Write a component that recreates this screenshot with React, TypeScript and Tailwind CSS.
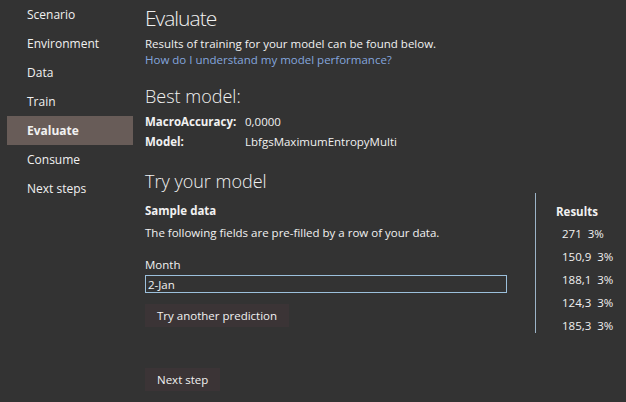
import React, { useState } from 'react';

const navItems = ['Scenario', 'Environment', 'Data', 'Train', 'Evaluate', 'Consume', 'Next steps'];

const results = [
    { value: '271', pct: '3%' },
    { value: '150,9', pct: '3%' },
    { value: '188,1', pct: '3%' },
    { value: '124,3', pct: '3%' },
    { value: '185,3', pct: '3%' },
];

export default function App() {
    const [month, setMonth] = useState('2-Jan');
    const active = 'Evaluate';

    return (
        <div
            className="w-[626px] h-[402px] bg-[#333333] text-[#f1f1f1] flex overflow-hidden text-[11.5px]"
            style={{ fontFamily: '"Segoe UI", "Open Sans", "Noto Sans", sans-serif' }}
        >
            <nav className="w-[145px] shrink-0 pl-[7px] text-[12px]">
                {navItems.map((item) => (
                    <div
                        key={item}
                        className={`w-[126px] h-[29px] flex items-center pl-[20px] ${item === active ? 'bg-[#685c58] font-bold' : ''}`}
                    >
                        {item}
                    </div>
                ))}
            </nav>

            <main className="flex-1 flex flex-col pt-[2px]">
                <h1 className="text-[21px] font-light leading-[32px] tracking-[-1px]">
                    Evaluate
                </h1>
                <p className="mt-[2px] leading-[16px]">Results of training for your model can be found below.</p>
                <a className="leading-[16px] text-[#84a6de] cursor-pointer">How do I understand my model performance?</a>

                <h2 className="mt-[16px] text-[18px] font-light leading-[24px]">Best model:</h2>
                <div className="mt-[6px] grid grid-cols-[100px_1fr] gap-y-[4px] leading-[16px]">
                    <span className="font-bold">MacroAccuracy:</span>
                    <span>0,0000</span>
                    <span className="font-bold">Model:</span>
                    <span>LbfgsMaximumEntropyMulti</span>
                </div>

                <h2 className="mt-[19px] text-[18px] font-light leading-[24px]">Try your model</h2>
                <div className="flex">
                    <div className="w-[362px] flex flex-col">
                        <span className="font-bold leading-[16px] mt-[10px]">Sample data</span>
                        <span className="leading-[16px] mt-[6px]">The following fields are pre-filled by a row of your data.</span>
                        <span className="leading-[16px] mt-[16px]">Month</span>
                        <input
                            value={month}
                            onChange={(e) => setMonth(e.target.value)}
                            className="mt-[2px] h-[18px] w-[362px] bg-[#333333] border border-[#9cc0dc] px-[2px] text-[11.5px] leading-[16px] outline-none"
                        />
                        <button className="mt-[11px] self-start h-[23px] px-[12px] bg-[#3b3436] leading-[16px]">
                            Try another prediction
                        </button>
                    </div>
                    <div className="ml-[28px] w-[1px] h-[140px] bg-[#9cb4c8]" />
                    <div className="ml-[20px] flex flex-col">
                        <span className="font-bold leading-[16px] mt-[11px]">Results</span>
                        <div className="flex flex-col gap-[7px] mt-[6px]">
                            {results.map((r, i) => (
                                <span key={i} className="leading-[16px] pl-[6px]">
                                    {r.value}&nbsp;&nbsp;{r.pct}
                                </span>
                            ))}
                        </div>
                    </div>
                </div>

                <button className="mt-[34px] self-start h-[23px] px-[12px] bg-[#3b3436] leading-[16px]">
                    Next step
                </button>
            </main>
        </div>
    );
}
